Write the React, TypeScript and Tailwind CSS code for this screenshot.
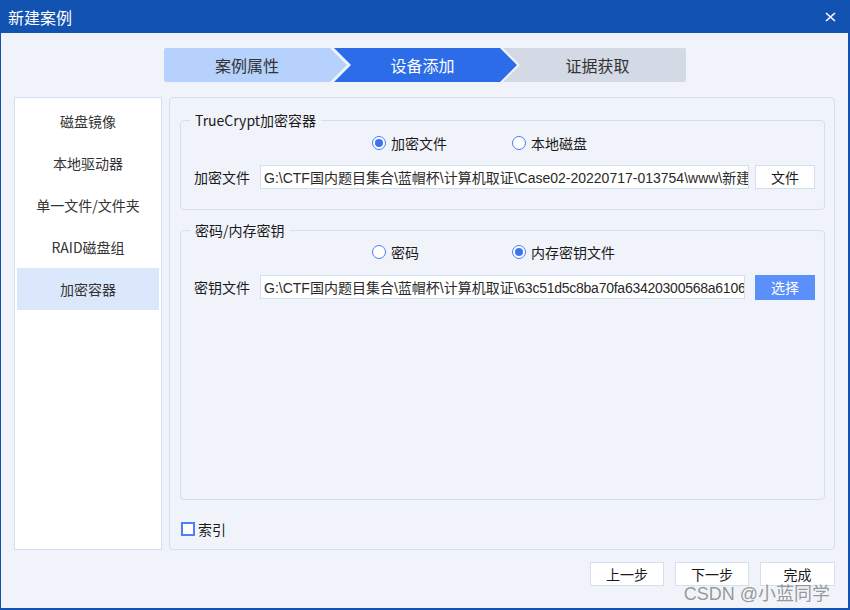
import React from "react";

const FONT = { fontFamily: '"Noto Sans CJK SC", "Noto Sans", sans-serif' };
const LATIN = { fontFamily: '"Liberation Sans", "Noto Sans CJK SC", sans-serif' };

function Radio({ checked, label }: { checked: boolean; label: string }) {
  return (
    <div className="flex items-center w-[140px]">
      <span className="w-[14px] h-[14px] rounded-full border border-[#4a7ef2] bg-white flex items-center justify-center">
        {checked && <span className="w-[8px] h-[8px] rounded-full bg-[#3b74f0]" />}
      </span>
      <span className="ml-[5px] text-[14px] leading-[20px] text-[#1a1a1a]">{label}</span>
    </div>
  );
}

function Group({
  title,
  className,
  children,
}: {
  title: string;
  className: string;
  children: React.ReactNode;
}) {
  return (
    <div className={"relative border border-[#d3def0] rounded-[4px] " + className}>
      <span className="absolute -top-[11px] left-[9px] px-[5px] bg-[#f0f4fa] text-[14px] leading-[20px] text-[#1a1a1a]">
        {title}
      </span>
      {children}
    </div>
  );
}

function L({ children, tight }: { children: React.ReactNode; tight?: boolean }) {
  return (
    <span className={tight ? "text-[14px] tracking-[-0.25px]" : "text-[14px]"} style={LATIN}>
      {children}
    </span>
  );
}

export default function App() {
  const items = ["磁盘镜像", "本地驱动器", "单一文件/文件夹", "RAID磁盘组", "加密容器"];
  return (
    <div className="w-[850px] h-[610px] bg-[#1252b0] flex flex-col relative" style={FONT}>
      {/* title bar */}
      <div className="h-[33px] flex items-center justify-between pl-[8px] pr-[14px] shrink-0">
        <span className="text-white text-[16px] leading-[20px]">新建案例</span>
        <svg width="11" height="10" viewBox="0 0 11 10">
          <path d="M1 1 L10 9 M10 1 L1 9" stroke="white" strokeWidth="1.6" />
        </svg>
      </div>

      {/* body */}
      <div className="flex-1 ml-[1px] mr-[2px] mb-[2px] bg-[#f0f4fa] flex flex-col">
        {/* steps */}
        <div className="mt-[15px] flex justify-center h-[34px] pl-[1px]">
          <div className="w-[183px] h-[34px] bg-[#b6d2fc] rounded-l-[2px] flex items-center justify-center pr-[17px] text-[16px] text-[#333] [clip-path:polygon(0_0,166px_0,183px_50%,166px_100%,0_100%)]">
            案例属性
          </div>
          <div className="ml-[-13px] w-[183px] h-[34px] bg-[#2c6ce8] flex items-center justify-center pr-[6px] text-[16px] text-white [clip-path:polygon(0_0,166px_0,183px_50%,166px_100%,0_100%,17px_50%)]">
            设备添加
          </div>
          <div className="ml-[-14px] w-[183px] h-[34px] bg-[#d3dae6] rounded-r-[2px] flex items-center justify-center pl-[6px] text-[16px] text-[#333] [clip-path:polygon(0_0,100%_0,100%_100%,0_100%,17px_50%)]">
            证据获取
          </div>
        </div>

        {/* content */}
        <div className="mt-[15px] h-[453px] flex pl-[13px] pr-[13px]">
          {/* sidebar */}
          <div className="w-[148px] h-full bg-white border border-[#d3def0] px-[2px] pt-[2px]">
            {items.map((t, i) => (
              <div
                key={t}
                className={
                  "h-[42px] flex items-center justify-center text-[14px] text-[#333] " +
                  (i === 4 ? "bg-[#dbe8fc]" : "")
                }
              >
                {t}
              </div>
            ))}
          </div>

          {/* main panel */}
          <div className="ml-[7px] flex-1 h-full border border-[#d3def0] rounded-[4px] flex flex-col pl-[10px] pr-[9px]">
            <Group title="TrueCrypt加密容器" className="mt-[22px] h-[90px]">
              <div className="pt-[12px] flex pl-[191px] h-[32px]">
                <Radio checked label="加密文件" />
                <Radio checked={false} label="本地磁盘" />
              </div>
              <div className="mt-[12px] flex items-center h-[24px] pl-[13px] pr-[9px]">
                <span className="w-[56px] text-[14px] text-[#1a1a1a]">加密文件</span>
                <div className="ml-[10px] w-[489px] h-[24px] bg-white border border-[#d3def0] overflow-hidden whitespace-nowrap pl-[3px] text-[14px] leading-[22px] text-[#2a2a2a]">
                  <L>G:\CTF</L>国内题目集合<L>\</L>蓝帽杯<L>\</L>计算机取证<L>\Case02-20220717-013754\www\</L>新建
                </div>
                <div className="ml-[6px] w-[60px] h-[24px] bg-white border border-[#d3def0] flex items-center justify-center text-[14px] text-[#1a1a1a]">
                  文件
                </div>
              </div>
            </Group>

            <Group title="密码/内存密钥" className="mt-[20px] h-[270px]">
              <div className="pt-[11px] flex pl-[191px] h-[31px]">
                <Radio checked={false} label="密码" />
                <Radio checked label="内存密钥文件" />
              </div>
              <div className="mt-[13px] flex items-start h-[25px] pl-[13px] pr-[9px]">
                <span className="w-[56px] h-[24px] leading-[24px] text-[14px] text-[#1a1a1a]">密钥文件</span>
                <div className="ml-[10px] w-[485px] h-[24px] bg-white border border-[#d3def0] overflow-hidden whitespace-nowrap pl-[3px] text-[14px] leading-[22px] text-[#2a2a2a]">
                  <L>G:\CTF</L>国内题目集合<L>\</L>蓝帽杯<L>\</L>计算机取证<L tight>\63c51d5c8ba70fa63420300568a6106</L>
                </div>
                <div className="ml-[10px] w-[60px] h-[25px] bg-[#5b8ff9] flex items-center justify-center text-[14px] text-white">
                  选择
                </div>
              </div>
            </Group>

            <div className="mt-[22px] h-[14px] flex items-center pl-[1px]">
              <span className="w-[14px] h-[14px] border-2 border-[#4d80f0] bg-white" />
              <span className="ml-[3px] text-[14px] leading-[18px] text-[#1a1a1a]">索引</span>
            </div>
          </div>
        </div>

        {/* footer */}
        <div className="mt-[12px] flex justify-end pr-[13px] gap-[11px]">
          <div className="w-[74px] h-[24px] bg-white border border-[#d3def0] flex items-center justify-center text-[14px] text-[#1a1a1a]">
            上一步
          </div>
          <div className="w-[74px] h-[24px] bg-white border border-[#d3def0] flex items-center justify-center text-[14px] text-[#1a1a1a]">
            下一步
          </div>
          <div className="w-[75px] h-[24px] bg-white border border-[#d3def0] flex items-center justify-center text-[14px] text-[#1a1a1a]">
            完成
          </div>
        </div>
      </div>

      {/* watermark */}
      <div
        className="absolute right-[20px] bottom-[5px] text-[18px] leading-[22px] text-[#8c8c8c]/90 whitespace-nowrap"
        style={LATIN}
      >
        CSDN @小蓝同学
      </div>
    </div>
  );
}
